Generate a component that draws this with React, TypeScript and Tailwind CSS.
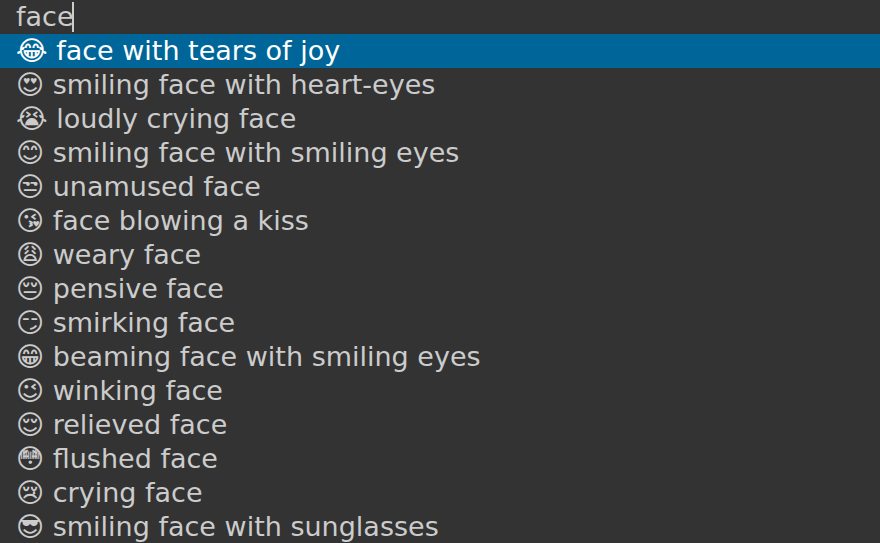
import React, { useState } from "react";

const entries: [string, string][] = [
  ["😂", "face with tears of joy"],
  ["😍", "smiling face with heart-eyes"],
  ["😭", "loudly crying face"],
  ["😊", "smiling face with smiling eyes"],
  ["😒", "unamused face"],
  ["😘", "face blowing a kiss"],
  ["😩", "weary face"],
  ["😔", "pensive face"],
  ["😏", "smirking face"],
  ["😁", "beaming face with smiling eyes"],
  ["😉", "winking face"],
  ["😌", "relieved face"],
  ["😳", "flushed face"],
  ["😢", "crying face"],
  ["😎", "smiling face with sunglasses"],
];

export default function App() {
  const [query, setQuery] = useState("face");
  const [selected, setSelected] = useState(0);

  return (
    <main className="min-h-screen bg-[#333333] font-['DejaVu_Sans',sans-serif] text-[27px] leading-[34px] text-[#cccccc]">
      <div className="flex h-[34px] items-center px-4">
        <input
          aria-label="Search emoji"
          className="field-sizing-content h-[34px] bg-transparent caret-transparent outline-none"
          value={query}
          onChange={(e) => setQuery(e.target.value)}
        />
        <span aria-hidden="true" className="-ml-0.5 h-[30px] w-0.5 bg-[#cccccc]" />
      </div>
      <ul>
        {entries.map(([emoji, name], i) => (
          <li key={name}>
            <button
              type="button"
              onClick={() => setSelected(i)}
              className={
                i === selected
                  ? "block h-[34px] w-full bg-[#006699] px-4 text-left whitespace-pre text-white"
                  : "block h-[34px] w-full px-4 text-left whitespace-pre"
              }
            >
              {emoji} {name}
            </button>
          </li>
        ))}
      </ul>
    </main>
  );
}
